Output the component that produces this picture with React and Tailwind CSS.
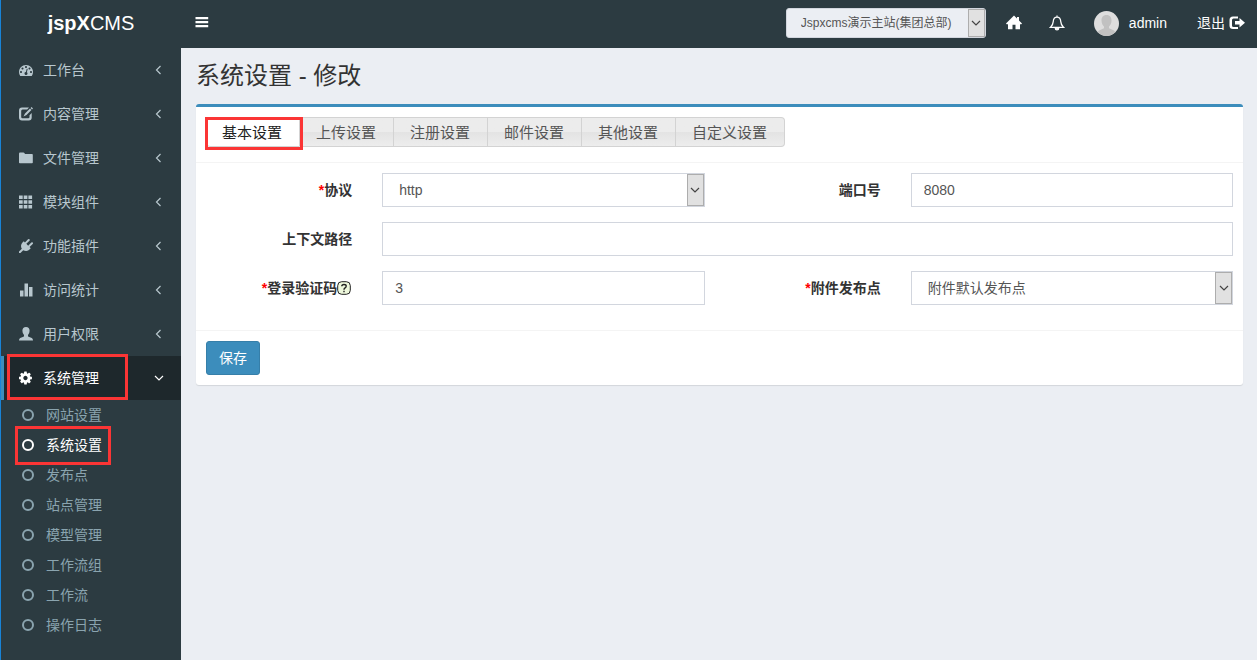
import React, { useState } from 'react';

const menus = [
  { label: '工作台', icon: 'dashboard' },
  { label: '内容管理', icon: 'edit' },
  { label: '文件管理', icon: 'folder' },
  { label: '模块组件', icon: 'grid' },
  { label: '功能插件', icon: 'plug' },
  { label: '访问统计', icon: 'stats' },
  { label: '用户权限', icon: 'user' }
];

const subMenus = ['网站设置', '系统设置', '发布点', '站点管理', '模型管理', '工作流组', '工作流', '操作日志'];

const tabs = ['基本设置', '上传设置', '注册设置', '邮件设置', '其他设置', '自定义设置'];

// Icons on the 1792 grid are font glyphs, the rest are drawn on a 14 or 16 grid
const icons = {
  dashboard: {
    box: '0 0 1792 1792',
    d: 'M384 1152q0-53-37.5-90.5t-90.5-37.5-90.5 37.5-37.5 90.5 37.5 90.5 90.5 37.5 90.5-37.5 37.5-90.5zm192-448q0-53-37.5-90.5t-90.5-37.5-90.5 37.5-37.5 90.5 37.5 90.5 90.5 37.5 90.5-37.5 37.5-90.5zm428 481l101-382q6-26-7.5-48.5t-38.5-29.5-48 6.5-30 39.5l-101 382q-60 5-107 43.5t-63 98.5q-20 77 20 146t117 89 146-20 89-117q16-60-6-117t-72-91zm660-33q0-53-37.5-90.5t-90.5-37.5-90.5 37.5-37.5 90.5 37.5 90.5 90.5 37.5 90.5-37.5 37.5-90.5zm-640-640q0-53-37.5-90.5t-90.5-37.5-90.5 37.5-37.5 90.5 37.5 90.5 90.5 37.5 90.5-37.5 37.5-90.5zm448 192q0-53-37.5-90.5t-90.5-37.5-90.5 37.5-37.5 90.5 37.5 90.5 90.5 37.5 90.5-37.5 37.5-90.5zm320 448q0 261-141 483-19 29-54 29h-1402q-35 0-54-29-141-221-141-483 0-182 71-348t191-286 286-191 348-71 348 71 286 191 191 286 71 348z'
  },
  edit: {
    box: '0 0 14 14',
    d: 'M3 .5h7L8.200 2.500H3.500Q2.200 2.500 2.200 4v6q0 1.300 1.300 1.300h5.700q1.300 0 1.300-1.300V8.300l2.200-2.200v4.400q0 3-3 3H3q-3 0-3-3v-7Q0 .5 3 .5zM12.600 0L14 1.400l-1 1L11.600 1zM11 1.600L12.400 3 7.500 8l-3 1.500L6 6.600z'
  },
  folder: {
    box: '0 0 14 14',
    d: 'M0 2.700Q0 1.500 1 1.500h3.500q1 0 1.500 1.500h7q.8 0 .8.800v7.700q0 .8-.8.800H.8q-.8 0-.8-.8z'
  },
  grid: {
    box: '0 0 14 14',
    d: 'M0 .5h3.700V4H0zM4.700.500h3.700V4H4.700zM9.400.500h3.700V4H9.400zM0 5.200h3.700v3.600H0zM4.700 5.200h3.700v3.600H4.700zM9.400 5.200h3.700v3.600H9.400zM0 10h3.700v3.500H0zM4.700 10h3.700v3.500H4.700zM9.400 10h3.700v3.500H9.400z'
  },
  plug: {
    box: '0 0 1792 1792',
    d: 'M1755 453q37 38 37 90.5t-37 90.5l-401 400 150 150-160 160q-163 163-389.5 186.5t-411.500-100.500l-362 362h-181v-181l362-362q-124-185-100.500-411.500t186.500-389.500l160-160 150 150 400-401q38-37 91-37t90 37 37 90.500-37 90.500l-400 401 234 234 401-400q38-37 91-37t90 37z'
  },
  stats: {
    box: '0 0 14 14',
    d: 'M1 7.500h3.500v6H1zM5.500.500H9v13H5.500zM10 4h3.500v9.500H10z'
  },
  user: {
    box: '0 0 14 14',
    d: 'M7 0q3.600 0 3.600 3.800Q10.600 6.500 9 8v1q0 .6.600.8l3.200 1.200Q14 11.500 14 13.500H0q0-2 1.200-2.500l3.200-1.200Q5 9.600 5 9V8Q3.400 6.500 3.400 3.800 3.400 0 7 0z'
  },
  cog: {
    box: '128 64 1664 1664',
    d: 'M1152 896q0-106-75-181t-181-75-181 75-75 181 75 181 181 75 181-75 75-181zm512-109v222q0 12-8 23t-20 13l-185 28q-19 54-39 91 35 50 107 138 10 12 10 25t-9 23q-27 37-99 108t-94 71q-12 0-26-9l-138-108q-44 23-91 38-16 136-29 186-7 28-36 28h-222q-14 0-24.500-8.500t-11.500-21.500l-28-184q-49-16-90-37l-141 107q-10 9-25 9-14 0-25-11-126-114-165-168-7-10-7-23 0-12 8-23 15-21 51-66.500t54-70.500q-27-50-41-99l-183-27q-13-2-21-12.500t-8-23.500v-222q0-12 8-23t19-13l186-28q14-46 39-92-40-57-107-138-10-12-10-24 0-10 9-23 26-36 98.500-107.500t94.500-71.500q13 0 26 10l138 107q44-23 91-38 16-136 29-186 7-28 36-28h222q14 0 24.500 8.500t11.500 21.500l28 184q49 16 90 37l142-107q9-9 24-9 13 0 25 10 129 119 165 170 7 8 7 22 0 12-8 23-15 21-51 66.500t-54 70.500q26 50 41 98l183 28q13 2 21 12.500t8 23.500z'
  },
  bars: {
    box: '0 0 14 14',
    d: 'M.5 1h12.700v2.200H.5zM.5 5h12.700v2.200H.5zM.5 9h12.700v2.200H.5z'
  },
  home: {
    box: '0 0 16 16',
    d: 'M8 .5l3 3V2h2v3.500l3 3-.6.700H14v5H9.500V9.700h-3v4.500H2v-5H.6L0 8.500z'
  },
  logout: {
    box: '0 0 16 16',
    d: 'M4 1.500h5v2H4.500Q3 3.500 3 5v5.500Q3 12 4.500 12H9v2H4Q.5 14 .5 10.500V5Q.5 1.500 4 1.500zM10.500 3l5.500 4.700-5.500 4.800v-3H6V6h4.500z'
  }
};

const Icon = ({ name, className }) => (
  <svg viewBox={icons[name].box} fill="currentColor" className={className} aria-hidden="true">
    <path d={icons[name].d} />
  </svg>
);

const Chevron = ({ className, d }) => (
  <svg viewBox="0 0 10 10" fill="none" stroke="currentColor" strokeWidth="1.2" className={className} aria-hidden="true">
    <path d={d} />
  </svg>
);

const Highlight = ({ className }) => (
  <span className={`pointer-events-none absolute z-10 border-3 border-[#fb3535] ${className}`} />
);

const Select = ({ id, label, className, children }) => (
  <div className="relative">
    <select
      id={id}
      aria-label={label}
      className={`block w-full appearance-none border border-[#d2d6de] pr-5 text-[#555] outline-none ${className}`}
    >
      {children}
    </select>
    <span className="pointer-events-none absolute inset-y-px right-px flex w-[17px] items-center justify-center border border-[#adadad] bg-[#e1e1e1] text-[#444]">
      <Chevron className="size-[10px]" d="M1 3l4 4 4-4" />
    </span>
  </div>
);

const Label = ({ htmlFor, required, children }) => (
  <label
    htmlFor={htmlFor}
    className="col-span-2 flex h-[34px] items-center justify-end font-bold whitespace-nowrap text-[#333]"
  >
    {required && <span className="text-[#f00]">*</span>}
    {children}
  </label>
);

const inputClass = 'h-[34px] w-full border border-[#d2d6de] bg-white px-3 text-[#555] outline-none';

const Header = () => (
  <header className="flex h-12 items-center pb-[2px] text-white">
    <a href="#" className="w-[180px] text-center text-xl leading-none">
      <b>jspX</b>CMS
    </a>
    <button type="button" aria-label="菜单" className="ml-[14px]">
      <Icon name="bars" className="size-[14px]" />
    </button>
    <div className="ml-auto flex items-center pr-3">
      <div className="w-[200px]">
        <Select label="站点" className="h-[30px] rounded-[3px] bg-[#ebeef3] pl-[14px] text-xs">
          <option>Jspxcms演示主站(集团总部)</option>
        </Select>
      </div>
      <a href="#" aria-label="首页" className="ml-5">
        <Icon name="home" className="size-4" />
      </a>
      <a href="#" aria-label="通知" className="ml-[27px]">
        <svg viewBox="0 0 14 14" className="size-4" fill="none" stroke="currentColor" strokeWidth="1.1">
          <path d="M7 1.800C4.500 1.800 3.800 3.800 3.700 5.800 3.600 8.200 2.600 9.600 1.200 10.900h11.600C11.400 9.600 10.400 8.200 10.300 5.800 10.200 3.800 9.500 1.800 7 1.800zM7 .4v1.400" />
          <path d="M5.500 11.500a1.500 1.500 0 0 0 3 0z" fill="currentColor" />
        </svg>
      </a>
      <a href="#" className="ml-[29px] flex items-center gap-[10px]">
        <svg viewBox="0 0 25 25" className="size-[25px] rounded-full bg-[#dedede]" fill="#c1c1c1">
          <path d="M12.500 4c3.500 0 5 2.400 5 5.500 0 3-1.300 4.800-2.500 6v1.700l5 2.300q1.500.8 1.500 5.500h-18q0-4.700 1.500-5.500l5-2.300v-1.700c-1.200-1.200-2.500-3-2.500-6C7.500 6.400 9 4 12.500 4z" />
        </svg>
        admin
      </a>
      <a href="#" className="ml-[30px] flex items-center gap-1">
        退出
        <Icon name="logout" className="size-4" />
      </a>
    </div>
  </header>
);

const Sidebar = () => {
  const [current, setCurrent] = useState('系统设置');

  return (
    <nav className="w-[180px] shrink-0">
      <ul>
        {menus.map((menu) => (
          <li key={menu.label}>
            <a href="#" className="flex h-11 items-center pr-[17px] pl-[18px] text-[#b8c7ce]">
              <Icon name={menu.icon} className="mr-[10px] size-[14px]" />
              {menu.label}
              <Chevron className="ml-auto size-[10px]" d="M6.500 1l-4 4 4 4" />
            </a>
          </li>
        ))}
        <li>
          <a href="#" className="relative flex h-11 items-center border-l-3 border-[#3c8dbc] bg-[#1e282c] pr-[17px] pl-[15px] text-white">
            <Icon name="cog" className="mr-[10px] size-[14px]" />
            系统管理
            <Chevron className="ml-auto size-[10px]" d="M1 3l4 4 4-4" />
            <Highlight className="-top-[2px] left-[3px] h-[46px] w-[121px]" />
          </a>
          <ul>
            {subMenus.map((label) => (
              <li key={label}>
                <a
                  href="#"
                  onClick={() => setCurrent(label)}
                  className={`relative flex h-[30px] items-center gap-3 pl-[21px] ${label === current ? 'text-white' : 'text-[#8aa4af]'}`}
                >
                  <span className="size-3 rounded-full border-2 border-current" />
                  {label}
                  {label === '系统设置' && <Highlight className="-top-1 left-[14px] h-[39px] w-[96px]" />}
                </a>
              </li>
            ))}
          </ul>
        </li>
      </ul>
    </nav>
  );
};

const App = () => {
  const [activeTab, setActiveTab] = useState(0);

  return (
    <div className="flex min-h-screen flex-col border-l border-[#1883d7] bg-[#2c3b41] font-['Liberation_Sans','Noto_Sans_CJK_SC',sans-serif] text-sm">
      <Header />
      <div className="flex grow">
        <Sidebar />
        <main className="min-w-0 grow bg-[#ebeef3] pt-[11px] pr-[14px] pl-[15px]">
          <h1 className="mb-[11px] text-2xl leading-[34px] text-[#333]">系统设置 - 修改</h1>

          <form
            onSubmit={(e) => e.preventDefault()}
            className="rounded-[3px] border-t-3 border-[#3c8dbc] bg-white shadow-[0_1px_1px_rgba(0,0,0,0.1)]"
          >
            <div className="border-b border-[#f4f4f4] px-[10px] pt-[10px] pb-[15px]">
              <div role="tablist" className="flex">
                {tabs.map((tab, index) => (
                  <button
                    key={tab}
                    type="button"
                    role="tab"
                    aria-selected={index === activeTab}
                    onClick={() => setActiveTab(index)}
                    className={`relative h-[30px] border-y border-r border-[#d3d3d3] pt-[2px] pr-[17px] pl-4 text-[15px] first:rounded-l first:border-l first:pl-[15px] last:rounded-r ${
                      index === activeTab
                        ? 'bg-white text-[#212121]'
                        : 'bg-linear-to-b from-[#ececec] from-50% via-[#e3e3e3] via-50% to-[#ededed] text-[#555]'
                    }`}
                  >
                    {tab}
                    {index === 0 && <Highlight className="-top-px -left-[2px] h-[33px] w-[98px]" />}
                  </button>
                ))}
              </div>
            </div>

            <div className="grid grid-cols-12 gap-x-[30px] gap-y-[15px] border-b border-[#f4f4f4] px-[10px] pt-[10px] pb-[25px]">
              <Label htmlFor="protocol" required>协议</Label>
              <div className="col-span-4">
                <Select id="protocol" className="h-[34px] bg-white pl-4">
                  <option>http</option>
                </Select>
              </div>
              <Label htmlFor="port">端口号</Label>
              <div className="col-span-4">
                <input id="port" type="text" defaultValue="8080" className={inputClass} />
              </div>

              <Label htmlFor="context">上下文路径</Label>
              <div className="col-span-10">
                <input id="context" type="text" className={inputClass} />
              </div>

              <Label htmlFor="captcha" required>
                登录验证码
                <svg viewBox="0 0 14 14" className="mr-px size-[14px]" fill="none" stroke="#222">
                  <rect x=".7" y=".7" width="12.600" height="12.600" rx="4" fill="#eef8dc" />
                  <path d="M4.800 5.300Q4.800 3.500 7 3.500t2.200 1.600Q9.200 6.300 8 7 7 7.500 7 8.700M7 9.700v1.500" strokeWidth="1.400" />
                </svg>
              </Label>
              <div className="col-span-4">
                <input id="captcha" type="text" defaultValue="3" className={inputClass} />
              </div>
              <Label htmlFor="publish" required>附件发布点</Label>
              <div className="col-span-4">
                <Select id="publish" className="h-[34px] bg-white pl-4">
                  <option>附件默认发布点</option>
                </Select>
              </div>
            </div>

            <div className="p-[10px]">
              <button
                type="submit"
                className="h-[34px] rounded-[3px] border border-[#367fa9] bg-[#3c8dbc] px-3 text-white"
              >
                保存
              </button>
            </div>
          </form>
        </main>
      </div>
    </div>
  );
};

export default App;
